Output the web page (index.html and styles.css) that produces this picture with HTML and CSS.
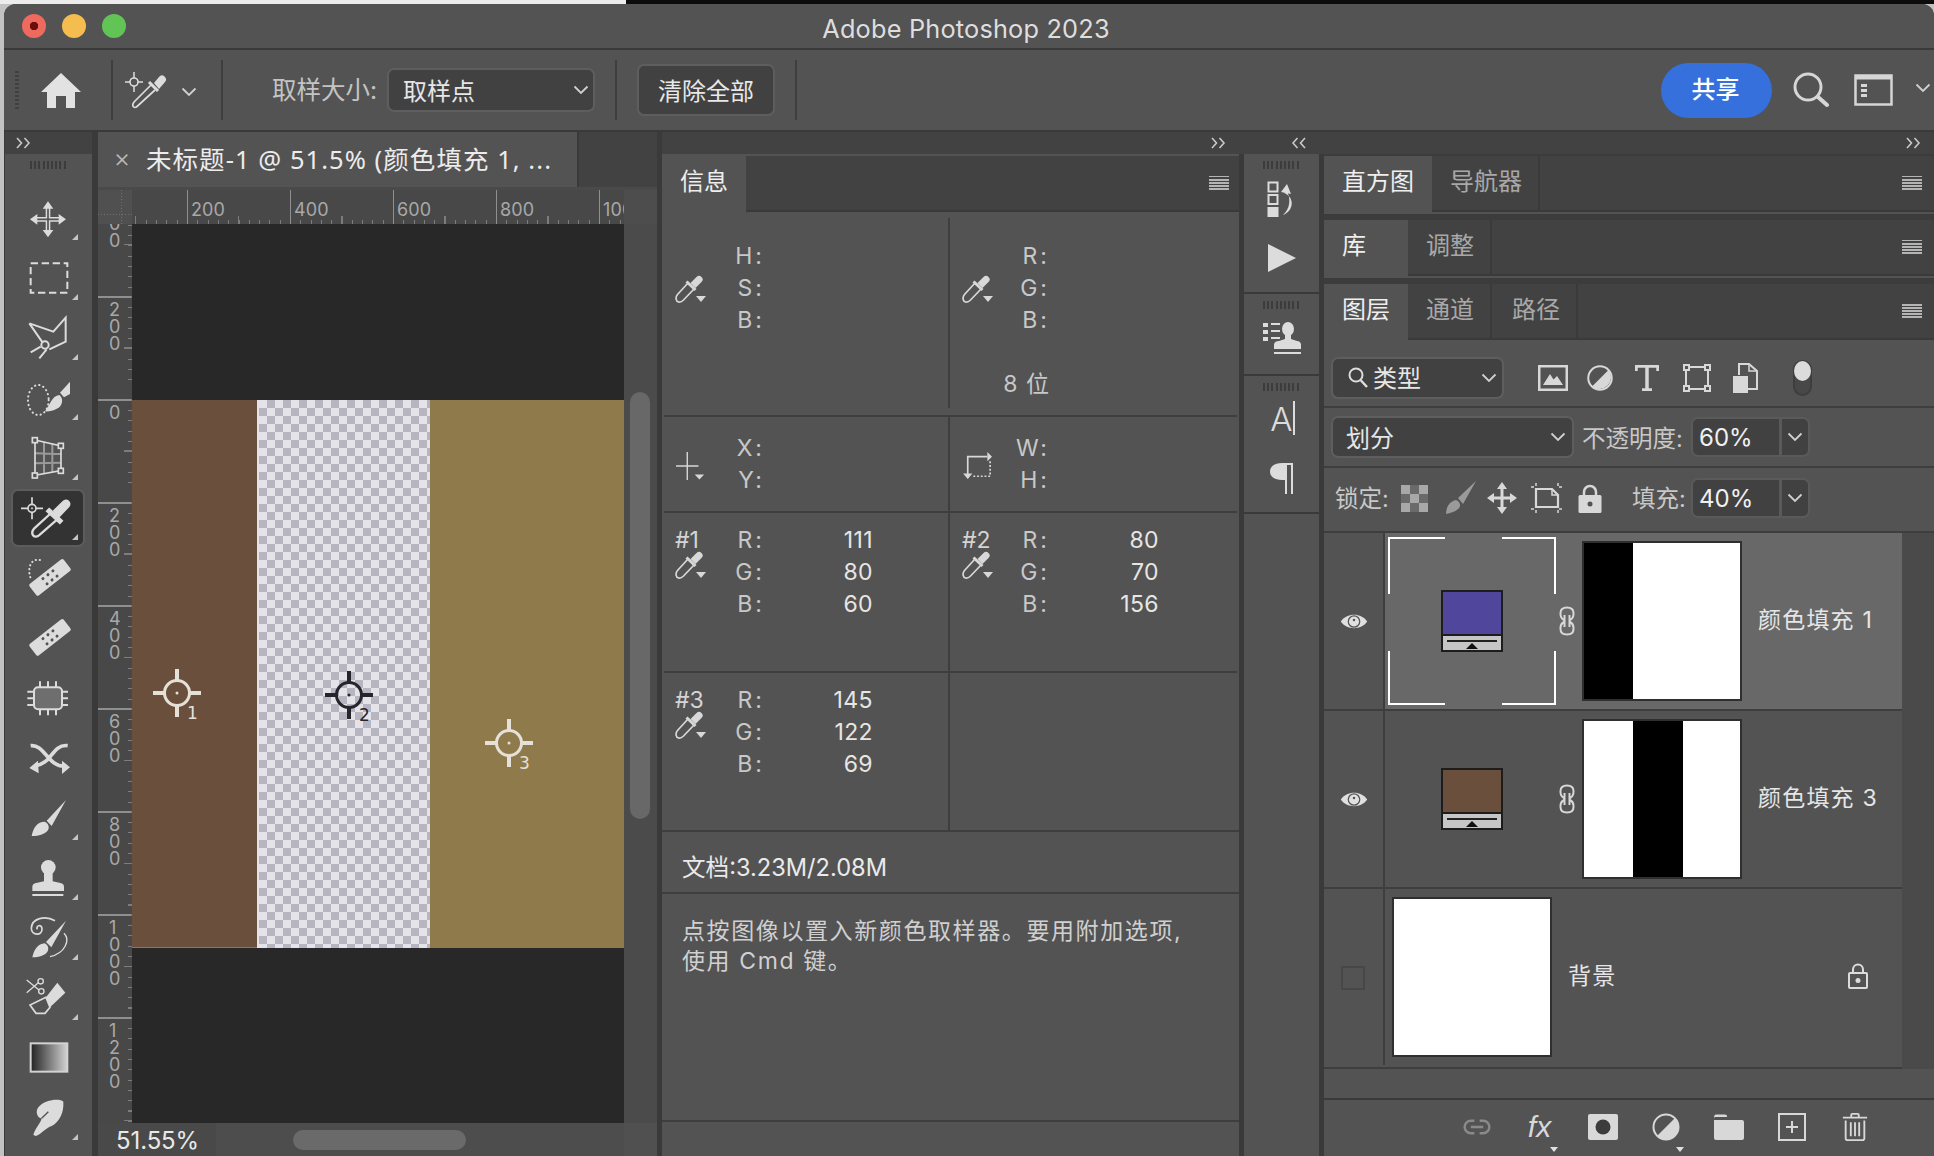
FILE: index.html
```html
<!DOCTYPE html>
<html lang="zh-CN">
<head>
<meta charset="utf-8">
<title>Adobe Photoshop 2023</title>
<link rel="stylesheet" href="styles.css">
</head>
<body>
<svg class="defs" aria-hidden="true">
  <symbol id="drop" viewBox="0 0 32 28">
    <path d="M13 8 L2.5 19.5 C0 22.5 1 26.5 3.5 27 C5.5 27.5 7 26.5 8.5 25 L19.5 13.5" fill="none" stroke="currentColor" stroke-width="1.7"/>
    <path d="M11.5 6.5 L20.5 15" fill="none" stroke="currentColor" stroke-width="3"/>
    <path d="M15.5 8 L21.5 2 a3.5 3.5 0 0 1 5 5 L20.5 13Z" fill="currentColor"/>
    <path d="M21 21 h10 l-5 6z" fill="currentColor"/>
  </symbol>
  <symbol id="chev" viewBox="0 0 16 10">
    <path d="M1.5 1.5 L8 8 L14.5 1.5" fill="none" stroke="currentColor" stroke-width="1.8"/>
  </symbol>
  <symbol id="dbl-r" viewBox="0 0 16 12">
    <path d="M2 1 L6.5 6 L2 11 M9.5 1 L14 6 L9.5 11" fill="none" stroke="currentColor" stroke-width="1.6"/>
  </symbol>
  <symbol id="dbl-l" viewBox="0 0 16 12">
    <path d="M6.5 1 L2 6 L6.5 11 M14 1 L9.5 6 L14 11" fill="none" stroke="currentColor" stroke-width="1.6"/>
  </symbol>
  <symbol id="eye" viewBox="0 0 26 18">
    <path d="M0.5 9 C6 0.500 20 0.500 25.500 9 C20 17.500 6 17.500 0.500 9Z" fill="currentColor"/>
    <circle cx="13" cy="9" r="6" fill="#535353"/>
    <circle cx="13" cy="9" r="4.800" fill="currentColor"/>
    <circle cx="13" cy="7.5" r="1.2" fill="#535353"/>
  </symbol>
  <symbol id="link" viewBox="0 0 16 30">
    <path d="M5 14 C1 12 1.500 9 1.500 7 C1.500 3 4 1.500 8 1.500 C12 1.500 14.500 3 14.500 7 C14.500 9 15 12 11 14 M5 16 C1 18 1.500 21 1.500 23 C1.500 27 4 28.500 8 28.500 C12 28.500 14.500 27 14.500 23 C14.500 21 15 18 11 16 M5.500 9 V21 M10.500 9 V21" fill="none" stroke="currentColor" stroke-width="2"/>
  </symbol>
  <symbol id="fillstrip" viewBox="0 0 58 14">
    <rect width="58" height="14" fill="#c6c6c6"/>
    <rect x="4" y="4" width="50" height="2" fill="#222"/>
    <path d="M23 13 L29 7 L35 13Z" fill="#111"/>
  </symbol>
</svg>

<div class="window">
  <header class="titlebar">
    <div class="lights">
      <span class="light red"></span>
      <span class="light yellow"></span>
      <span class="light green"></span>
    </div>
    <div class="apptitle">Adobe Photoshop 2023</div>
  </header>

  <div class="options">
    <span class="optgrip"></span>
    <svg class="home" viewBox="0 0 40 35"><path d="M20 0 L40 19 H34 V35 H25 V23 H15 V35 H6 V19 H0Z" fill="currentColor"/></svg>
    <span class="vsep sep-a"></span>
    <svg class="optdrop" viewBox="0 0 42 38">
      <g fill="none" stroke="currentColor">
        <circle cx="9" cy="11" r="4" stroke-width="1.600"/>
        <path d="M9 1 V7 M9 15 V21 M0 11 H5 M13 11 H18" stroke-width="1.500"/>
        <path d="M26 14 L10 30 C6 34 8 37.500 11.500 36 L30 19" stroke-width="1.700"/>
        <path d="M24 11 L33 20" stroke-width="3"/>
      </g>
      <path d="M29 12 L34 6 a3.500 3.500 0 0 1 6 5 L34 18Z" fill="currentColor"/>
    </svg>
    <svg class="chev opt-chev"><use href="#chev"/></svg>
    <span class="vsep sep-b"></span>
    <span class="optlabel">取样大小:</span>
    <div class="select sel-sample"><span>取样点</span><svg class="chev"><use href="#chev"/></svg></div>
    <span class="vsep sep-c"></span>
    <button class="clearbtn">清除全部</button>
    <span class="vsep sep-d"></span>
    <button class="share">共享</button>
    <svg class="search" viewBox="0 0 36 36"><circle cx="15" cy="15" r="13" fill="none" stroke="currentColor" stroke-width="3"/><path d="M25 25 L34 33" stroke="currentColor" stroke-width="4" stroke-linecap="round"/></svg>
    <svg class="wsicon" viewBox="0 0 39 32"><rect x="1.500" y="1.500" width="36" height="29" fill="none" stroke="currentColor" stroke-width="2.500"/><rect x="1.500" y="1.500" width="36" height="4" fill="currentColor"/><path d="M7 10 h6 v3 h-6z M7 15 h6 v3 h-6z M7 20 h6 v3 h-6z" fill="currentColor"/></svg>
    <svg class="chev ws-chev"><use href="#chev"/></svg>
  </div>

  <div class="workspace">
    <aside class="tools">
      <div class="striphead"><svg class="dbl dbl-tools"><use href="#dbl-r"/></svg></div>
      <div class="grip"></div>
      <div class="toollist">
        <svg class="tool" viewBox="54 -3 180 180">
          <path d="M144 34 L128 56 H160Z M144 142 L128 120 H160Z M90 88 L112 72 V104Z M198 88 L176 72 V104Z" fill="currentColor"/>
          <path d="M144 50 V126 M106 88 H182" stroke="currentColor" stroke-width="14" fill="none"/>
          <path d="M144 56 V120 M112 88 H176" stroke="#535353" stroke-width="5" fill="none"/>
          <path d="M216 150 H234 V132Z" class="tri"/>
        </svg>
        <svg class="tool" viewBox="54 177 180 180">
          <rect x="92" y="220" width="110" height="88" fill="none" stroke="currentColor" stroke-width="6" stroke-dasharray="22 11"/>
          <path d="M216 330 H234 V312Z" class="tri"/>
        </svg>
        <svg class="tool" viewBox="54 357 180 180">
          <path d="M88 400 L160 425 L197 383 V455 L148 478 M88 400 L128 458 M92 487 L122 470 M118 505 L140 478" fill="none" stroke="currentColor" stroke-width="6"/>
          <circle cx="135" cy="465" r="11" fill="none" stroke="currentColor" stroke-width="6"/>
          <path d="M216 510 H234 V492Z" class="tri"/>
        </svg>
        <svg class="tool" viewBox="54 537 180 180">
          <ellipse cx="115" cy="630" rx="31" ry="45" fill="none" stroke="currentColor" stroke-width="6" stroke-linecap="round" stroke-dasharray="1 12" />
          <path d="M135 664 C150 645 155 618 178 615 C192 625 188 650 170 656 C160 662 146 665 135 664Z M180 608 L210 575 V612 L192 622Z" fill="currentColor"/>
          <path d="M216 690 H234 V672Z" class="tri"/>
        </svg>
        <svg class="tool" viewBox="54 717 180 180">
          <path d="M132 755 L132 850 M157 762 V846 M105 790 L183 792 M105 820 L183 818" stroke="#9a9a9a" stroke-width="6" fill="none"/>
          <path d="M105 750 L183 768 V842 L105 856Z" fill="none" stroke="currentColor" stroke-width="5"/>
          <g fill="#535353" stroke="currentColor" stroke-width="5"><rect x="97" y="743" width="15" height="15"/><rect x="175" y="760" width="15" height="15"/><rect x="175" y="835" width="15" height="15"/><rect x="97" y="849" width="15" height="15"/></g>
          <path d="M216 870 H234 V852Z" class="tri"/>
        </svg>
        <div class="toolactive">
          <svg class="tool" viewBox="54 897 180 180">
            <g fill="none" stroke="currentColor">
              <circle cx="96" cy="955" r="12" stroke-width="5"/>
              <path d="M96 922 V943 M96 967 V988 M63 955 H84 M108 955 H129" stroke-width="5"/>
              <circle cx="96" cy="955" r="2" stroke-width="3"/>
              <path d="M150 972 L103 1015 C90 1030 100 1048 117 1036 L172 988" stroke-width="7"/>
              <path d="M142 958 L185 998" stroke-width="16"/>
            </g>
            <path d="M158 962 L188 933 a13 13 0 0 1 20 18 L176 985Z" fill="currentColor"/>
            <path d="M216 1050 H234 V1032Z" class="tri"/>
          </svg>
        </div>
        <svg class="tool" viewBox="54 1077 180 180">
          <path d="M120 1110 C95 1105 80 1130 92 1165" fill="none" stroke="currentColor" stroke-width="6" stroke-linecap="round" stroke-dasharray="1 11"/>
          <g transform="rotate(-38 150 1162)">
            <rect x="85" y="1140" width="130" height="44" rx="6" fill="currentColor"/>
            <g fill="#535353"><circle cx="131" cy="1152" r="4.500"/><circle cx="150" cy="1152" r="4.500"/><circle cx="169" cy="1152" r="4.500"/><circle cx="131" cy="1172" r="4.500"/><circle cx="150" cy="1172" r="4.500"/><circle cx="169" cy="1172" r="4.500"/></g>
          </g>
        </svg>
        <svg class="tool" viewBox="54 1257 180 180">
          <g transform="rotate(-38 150 1342)">
            <rect x="85" y="1320" width="130" height="44" rx="6" fill="currentColor"/>
            <g fill="#535353"><circle cx="131" cy="1332" r="4.500"/><circle cx="150" cy="1332" r="4.500"/><circle cx="169" cy="1332" r="4.500"/><circle cx="131" cy="1352" r="4.500"/><circle cx="150" cy="1352" r="4.500"/><circle cx="169" cy="1352" r="4.500"/></g>
          </g>
        </svg>
        <svg class="tool" viewBox="54 -3 180 180">
          <rect x="102" y="52" width="84" height="66" rx="12" fill="#6e6e6e" stroke="currentColor" stroke-width="6"/>
          <path d="M120 34 V52 M144 34 V52 M168 34 V52 M120 118 V136 M144 118 V136 M168 118 V136 M82 65 H102 M82 85 H102 M82 105 H102 M186 65 H204 M186 85 H204 M186 105 H204" stroke="currentColor" stroke-width="6" fill="none"/>
        </svg>
        <svg class="tool" viewBox="54 177 180 180">
          <path d="M92 227 C132 222 145 290 192 288 M203 227 C165 222 155 265 135 275 C125 282 118 285 105 288" fill="none" stroke="currentColor" stroke-width="11"/>
          <path d="M210 292 L186 272 L186 312Z M88 294 L114 272 L116 310Z" fill="currentColor"/>
        </svg>
        <svg class="tool" viewBox="54 357 180 180">
          <path d="M95 498 C100 472 112 455 134 455 C150 462 150 480 136 488 C122 496 108 498 95 498Z M140 452 L198 390 L155 468Z" fill="currentColor"/>
          <path d="M216 510 H234 V492Z" class="tri"/>
        </svg>
        <svg class="tool" viewBox="54 537 180 180">
          <circle cx="145" cy="592" r="22" fill="currentColor"/>
          <path d="M97 663 V650 Q97 640 112 638 L132 634 V606 H158 V634 L178 638 Q192 640 192 650 V663Z" fill="currentColor"/>
          <path d="M97 675 H190" stroke="currentColor" stroke-width="6"/>
          <path d="M216 690 H234 V672Z" class="tri"/>
        </svg>
        <svg class="tool" viewBox="54 717 180 180">
          <path d="M165 752 C135 735 95 745 94 775 C94 798 128 798 126 776 C124 760 106 768 112 778" fill="none" stroke="currentColor" stroke-width="5"/>
          <path d="M97 862 C102 838 114 822 134 820 C148 826 148 844 136 852 C122 860 110 862 97 862Z M138 816 L198 752 L154 832Z" fill="currentColor"/>
          <path d="M192 790 C212 810 195 850 150 860" fill="none" stroke="currentColor" stroke-width="4"/>
          <path d="M216 870 H234 V852Z" class="tri"/>
        </svg>
        <svg class="tool" viewBox="54 897 180 180">
          <g fill="none" stroke="currentColor" stroke-width="4"><circle cx="122" cy="934" r="8"/><circle cx="124" cy="964" r="8"/><path d="M80 930 L117 960 M80 968 L115 938"/></g>
          <path d="M138 982 L172 938 L196 968 L150 1012Z" fill="currentColor"/>
          <path d="M138 982 L90 1005 L108 1030 H135 L150 1012Z" fill="none" stroke="currentColor" stroke-width="5"/>
          <path d="M216 1050 H234 V1032Z" class="tri"/>
        </svg>
        <svg class="tool" viewBox="54 1077 180 180">
          <defs><linearGradient id="gr"><stop offset="0" stop-color="#222"/><stop offset="1" stop-color="#d2d2d2"/></linearGradient></defs>
          <rect x="92" y="1120" width="110" height="85" fill="url(#gr)" stroke="#d2d2d2" stroke-width="6"/>
        </svg>
        <svg class="tool" viewBox="54 1257 180 180">
          <path d="M100 1395 C105 1375 122 1360 125 1345 C112 1345 105 1325 115 1312 C135 1288 180 1285 190 1295 C192 1325 180 1355 155 1368 C140 1372 120 1395 108 1398Z" fill="currentColor"/>
          <path d="M125 1345 L145 1325" stroke="#535353" stroke-width="4"/>
          <path d="M216 1410 H234 V1392Z" class="tri"/>
        </svg>
      </div>
    </aside>

    <main class="doc">
      <div class="doctabs">
        <div class="doctab"><span class="close">×</span><span class="doctitle">未标题-1 @ 51.5% (颜色填充 1, ...</span></div>
      </div>
      <div class="rulerrow">
        <div class="corner"></div>
        <div class="hruler">
          <span class="hseg">200</span><span class="hseg">400</span><span class="hseg">600</span><span class="hseg">800</span><span class="hseg">1000</span>
        </div>
        <div class="rulerrest"></div>
      </div>
      <div class="docbody">
        <div class="vruler">
          <span class="vseg vfirst">200</span><span class="vseg">200</span><span class="vseg">0</span><span class="vseg">200</span><span class="vseg">400</span><span class="vseg">600</span><span class="vseg">800</span><span class="vseg">1000</span><span class="vseg">1200</span>
        </div>
        <div class="canvas">
          <div class="imgrow">
            <div class="band brown"></div>
            <div class="band checker"></div>
            <div class="band ochre"></div>
            <svg class="target t1" viewBox="0 0 64 64"><circle cx="26" cy="26" r="12.500" class="ring"/><path d="M26 2 V13 M26 39 V50 M2 26 H13 M39 26 H50" class="ring thick"/><circle cx="26" cy="26" r="1.500" class="dotf"/><text x="36" y="52">1</text></svg>
            <svg class="target t2" viewBox="0 0 64 64"><circle cx="26" cy="26" r="12.500" class="ring"/><path d="M26 2 V13 M26 39 V50 M2 26 H13 M39 26 H50" class="ring thick"/><circle cx="26" cy="26" r="1.500" class="dotf"/><text x="36" y="52">2</text></svg>
            <svg class="target t3" viewBox="0 0 64 64"><circle cx="26" cy="26" r="12.500" class="ring"/><path d="M26 2 V13 M26 39 V50 M2 26 H13 M39 26 H50" class="ring thick"/><circle cx="26" cy="26" r="1.500" class="dotf"/><text x="36" y="52">3</text></svg>
          </div>
        </div>
        <div class="vscroll"><span class="vthumb"></span></div>
      </div>
      <div class="docfoot">
        <span class="zoomlabel">51.55%</span>
        <div class="hscroll"><span class="hthumb"></span></div>
        <span class="footcorner"></span>
      </div>
    </main>

    <section class="info">
      <div class="striphead right"><svg class="dbl"><use href="#dbl-r"/></svg></div>
      <div class="tabs">
        <span class="tab active info-tab">信息</span>
        <span class="menu"></span>
      </div>
      <div class="irow ra">
        <div class="cell">
          <div class="cicon ic-pad1"><svg class="drop"><use href="#drop"/></svg></div>
          <div class="lines">
            <div class="line"><b>H:</b></div><div class="line"><b>S:</b></div><div class="line"><b>B:</b></div>
          </div>
        </div>
        <div class="cell c2">
          <div class="cicon ic-pad1"><svg class="drop"><use href="#drop"/></svg></div>
          <div class="lines">
            <div class="line"><b>R:</b></div><div class="line"><b>G:</b></div><div class="line"><b>B:</b></div>
            <div class="line bits"><b>8 位</b></div>
          </div>
        </div>
      </div>
      <div class="ihr"></div>
      <div class="irow rb">
        <div class="cell">
          <div class="cicon ic-pad2"><svg class="drop" viewBox="0 0 32 30"><path d="M12 0 V30 M0 15 H24" fill="none" stroke="currentColor" stroke-width="1.500"/><path d="M20 24 h10 l-5 5.500z" fill="currentColor"/></svg></div>
          <div class="lines"><div class="line"><b>X:</b></div><div class="line"><b>Y:</b></div></div>
        </div>
        <div class="cell c2">
          <div class="cicon ic-pad2"><svg class="drop" viewBox="0 0 32 30"><path d="M5 28 V5 H26" fill="none" stroke="currentColor" stroke-width="1.800"/><path d="M26 0 L31 5 L26 10Z M0 23 H10 L5 29Z" fill="currentColor"/><path d="M29 10 V26 H9" fill="none" stroke="currentColor" stroke-width="1.800" stroke-dasharray="2 2"/></svg></div>
          <div class="lines"><div class="line"><b>W:</b></div><div class="line"><b>H:</b></div></div>
        </div>
      </div>
      <div class="ihr"></div>
      <div class="irow rc">
        <div class="cell">
          <div class="cicon"><span class="num">#1</span><svg class="drop"><use href="#drop"/></svg></div>
          <div class="lines">
            <div class="line"><b>R:</b><i>111</i></div><div class="line"><b>G:</b><i>80</i></div><div class="line"><b>B:</b><i>60</i></div>
          </div>
        </div>
        <div class="cell c2">
          <div class="cicon"><span class="num">#2</span><svg class="drop"><use href="#drop"/></svg></div>
          <div class="lines">
            <div class="line"><b>R:</b><i>80</i></div><div class="line"><b>G:</b><i>70</i></div><div class="line"><b>B:</b><i>156</i></div>
          </div>
        </div>
      </div>
      <div class="ihr"></div>
      <div class="irow rd">
        <div class="cell">
          <div class="cicon"><span class="num">#3</span><svg class="drop"><use href="#drop"/></svg></div>
          <div class="lines">
            <div class="line"><b>R:</b><i>145</i></div><div class="line"><b>G:</b><i>122</i></div><div class="line"><b>B:</b><i>69</i></div>
          </div>
        </div>
        <div class="cell c2"></div>
      </div>
      <div class="docsize">文档:3.23M/2.08M</div>
      <div class="hint">点按图像以置入新颜色取样器。要用附加选项,<br>使用 Cmd 键。</div>
      <div class="infofoot"></div>
    </section>

    <nav class="dock">
      <div class="striphead dockhead"><svg class="dbl"><use href="#dbl-l"/></svg></div>
      <div class="docksec s1">
        <div class="grip"></div>
        <svg class="dockicon hist" viewBox="0 0 32 36"><path d="M1.500 1.500 H10.500 V10.500 H1.500Z M1.500 14 H10.500 V23 H1.500Z" fill="none" stroke="currentColor" stroke-width="2"/><rect x="0.500" y="26" width="11" height="10" fill="currentColor"/><path d="M17 12 C28 16 27 30 16 34 C23 28 24 18 20 10" fill="currentColor"/><path d="M14 11 L20 3 L24 13Z" fill="currentColor"/></svg>
        <svg class="dockicon play" viewBox="0 0 28 28"><path d="M0 0 L28 14 L0 28Z" fill="currentColor"/></svg>
      </div>
      <div class="docksec s2">
        <div class="grip"></div>
        <svg class="dockicon stamp" viewBox="0 0 38 33"><path d="M0 1 h5 v4 h-5z M8 1 h9 v2 h-9z M0 8 h5 v4 h-5z M8 8 h9 v2 h-9z M0 15 h5 v4 h-5z M8 15 h9 v2 h-9z" fill="currentColor"/><ellipse cx="25" cy="7" rx="6" ry="7" fill="currentColor"/><path d="M11 27 V22 Q12 19 16 19 L22 17 V11 H28 V17 L34 19 Q37 19 38 22 V27Z M11 30 H38 V32 H11Z" fill="currentColor"/></svg>
      </div>
      <div class="docksec s3">
        <div class="grip"></div>
        <div class="charicon"><span class="bigA">A</span><span class="caret"></span></div>
        <svg class="dockicon pil" viewBox="0 0 24 31"><path d="M12 0 H23 V31 H21 V2 H17 V31 H15 V17 H12 C4 17 0 13 0 8.500 C0 4 4 0 12 0Z" fill="currentColor"/></svg>
      </div>
      <div class="docksec s4"></div>
    </nav>

    <section class="panels">
      <div class="striphead right"><svg class="dbl"><use href="#dbl-r"/></svg></div>
      <div class="group">
        <div class="tabs">
          <span class="tab active t108">直方图</span><span class="tab t108">导航器</span>
          <span class="menu"></span>
        </div>
      </div>
      <div class="group">
        <div class="tabs">
          <span class="tab active t84">库</span><span class="tab t84">调整</span>
          <span class="menu"></span>
        </div>
      </div>
      <div class="layers">
        <div class="tabs">
          <span class="tab active t84">图层</span><span class="tab t84">通道</span><span class="tab t86">路径</span>
          <span class="menu"></span>
        </div>
        <div class="lrow filterrow">
          <div class="select sel-filter">
            <svg class="mini" viewBox="0 0 20 22"><circle cx="8" cy="8" r="6.500" fill="none" stroke="currentColor" stroke-width="2"/><path d="M12.500 13 L19 20" stroke="currentColor" stroke-width="2.500"/></svg>
            <span>类型</span><svg class="chev"><use href="#chev"/></svg>
          </div>
          <svg class="ficon f1" viewBox="0 0 30 26"><rect x="1.250" y="1.250" width="27.500" height="23.500" fill="none" stroke="currentColor" stroke-width="2.500"/><path d="M5 20 L12 9 L15.500 14.500 L19 11 L25 20Z" fill="currentColor"/></svg>
          <svg class="ficon f2" viewBox="0 0 26 26"><circle cx="13" cy="13" r="11.750" fill="none" stroke="currentColor" stroke-width="2"/><path d="M21.500 5 A11.750 11.750 0 0 1 5 21.500Z" fill="currentColor"/></svg>
          <svg class="ficon f3" viewBox="0 0 24 26"><path d="M1 6 V1 H23 V6 M12 1 V25 M7 25 H17" fill="none" stroke="currentColor" stroke-width="3.500"/></svg>
          <svg class="ficon f4" viewBox="0 0 28 28"><rect x="3" y="3" width="22" height="22" fill="none" stroke="currentColor" stroke-width="2"/><g fill="#535353" stroke="currentColor" stroke-width="2"><rect x="1" y="1" width="5" height="5"/><rect x="22" y="1" width="5" height="5"/><rect x="1" y="22" width="5" height="5"/><rect x="22" y="22" width="5" height="5"/></g></svg>
          <svg class="ficon f5" viewBox="0 0 26 30"><path d="M7 12 V1 H17 L25 8 V26 H15" fill="none" stroke="currentColor" stroke-width="2"/><path d="M17 1 V8 H25" fill="none" stroke="currentColor" stroke-width="1.500"/><rect x="1" y="13" width="15" height="17" fill="currentColor"/></svg>
          <span class="toggle"><span class="knob"></span></span>
        </div>
        <div class="lrow blendrow">
          <div class="select sel-blend"><span>划分</span><svg class="chev"><use href="#chev"/></svg></div>
          <span class="flabel opl">不透明度:</span>
          <div class="numbox"><span class="nval">60%</span><span class="ndrop"><svg class="chev"><use href="#chev"/></svg></span></div>
        </div>
        <div class="lrow lockrow">
          <span class="flabel lockl">锁定:</span>
          <svg class="licon l1" viewBox="0 0 27 27"><rect width="27" height="27" fill="#a8a8a8"/><path d="M9 0 h9 v9 h-9z M0 9 h9 v9 h-9z M18 9 h9 v9 h-9z M9 18 h9 v9 h-9z" fill="#6a6a6a"/></svg>
          <svg class="licon l2" viewBox="0 0 32 34"><path d="M1 33 C1 26 5 20 11 19 C16 21 16 26 13 28 C10 31 5 32 1 33Z M13 17 L31 0 L18 23Z" fill="#9a9a9a"/></svg>
          <svg class="licon l3" viewBox="0 0 30 32"><path d="M15 0 L10 7 H20Z M15 32 L10 25 H20Z M0 16 L7 11 V21Z M30 16 L23 11 V21Z" fill="currentColor"/><path d="M15 5 V27 M5 16 H25" stroke="currentColor" stroke-width="3"/></svg>
          <svg class="licon l4" viewBox="0 0 32 30"><path d="M5 6 H21 L27 12 V24 H5Z" fill="none" stroke="currentColor" stroke-width="2.200"/><path d="M21 6 V12 H27" fill="none" stroke="currentColor" stroke-width="1.500"/><path d="M0 4 h3 M5 0 v3 M28 4 h3 M27 0 v3 M0 26 h3 M5 27 v3 M28 26 h3 M27 27 v3" stroke="currentColor" stroke-width="1.500"/></svg>
          <svg class="licon l5" viewBox="0 0 24 29"><path d="M6 12 V8 a6 6 0 0 1 12 0 V12" fill="none" stroke="currentColor" stroke-width="2.500"/><rect x="0.500" y="11" width="23" height="18" rx="1.500" fill="currentColor"/><circle cx="12" cy="20" r="2.500" fill="#535353"/></svg>
          <span class="flabel filll">填充:</span>
          <div class="numbox"><span class="nval">40%</span><span class="ndrop"><svg class="chev"><use href="#chev"/></svg></span></div>
        </div>
        <div class="layerlist">
          <div class="layer sel">
            <div class="vis"><svg class="eye"><use href="#eye"/></svg></div>
            <div class="lbody">
              <div class="bracket">
                <div class="fillthumb"><span class="swatch purple"></span><svg class="strip"><use href="#fillstrip"/></svg></div>
              </div>
              <svg class="chain"><use href="#link"/></svg>
              <div class="mask m1"></div>
              <span class="lname">颜色填充 1</span>
            </div>
          </div>
          <div class="layer">
            <div class="vis"><svg class="eye"><use href="#eye"/></svg></div>
            <div class="lbody">
              <div class="bracket plain">
                <div class="fillthumb"><span class="swatch umber"></span><svg class="strip"><use href="#fillstrip"/></svg></div>
              </div>
              <svg class="chain"><use href="#link"/></svg>
              <div class="mask m2"></div>
              <span class="lname">颜色填充 3</span>
            </div>
          </div>
          <div class="layer last">
            <div class="vis"><span class="novis"></span></div>
            <div class="lbody">
              <div class="mask bg"></div>
              <span class="lname bgname">背景</span>
              <svg class="bglock" viewBox="0 0 20 26"><path d="M5 10 V6.500 a5 5 0 0 1 10 0 V10" fill="none" stroke="currentColor" stroke-width="2"/><rect x="1" y="10" width="18" height="15" rx="1" fill="none" stroke="currentColor" stroke-width="2"/><circle cx="10" cy="17.500" r="2.500" fill="currentColor"/></svg>
            </div>
          </div>
        </div>
        <div class="lfoot">
          <span class="fcell"><svg class="fi dim" viewBox="0 0 34 20"><path d="M14 3 H10 a7 7 0 0 0 0 14 h4 M20 3 h4 a7 7 0 0 1 0 14 h-4 M10 10 H24" fill="none" stroke="currentColor" stroke-width="2.800"/></svg></span>
          <span class="fcell fx">fx<em class="ftri"></em></span>
          <span class="fcell"><svg class="fi" viewBox="0 0 30 26"><rect width="30" height="26" rx="2" fill="currentColor"/><ellipse cx="15" cy="13" rx="7.500" ry="7.500" fill="#3c3c3c"/></svg></span>
          <span class="fcell"><svg class="fi" viewBox="0 0 28 28"><circle cx="14" cy="14" r="12.500" fill="none" stroke="currentColor" stroke-width="2"/><path d="M23 5 A12.500 12.500 0 0 1 5 23Z" fill="currentColor"/></svg><em class="ftri"></em></span>
          <span class="fcell"><svg class="fi" viewBox="0 0 30 26"><path d="M0 4 Q0 0.500 2 0.500 H11 Q13 0.500 13 2 V3 H1Z M0 6 H28 Q30 6 30 8 V24 Q30 26 28 26 H2 Q0 26 0 24Z" fill="currentColor"/></svg></span>
          <span class="fcell"><svg class="fi" viewBox="0 0 28 28"><rect x="1" y="1" width="26" height="26" fill="none" stroke="currentColor" stroke-width="2"/><path d="M14 8 V20 M8 14 H20" stroke="currentColor" stroke-width="2"/></svg></span>
          <span class="fcell"><svg class="fi" viewBox="0 0 26 30"><path d="M0 5 H26 M9 5 V2 Q9 1 10 1 H16 Q17 1 17 2 V5" fill="none" stroke="currentColor" stroke-width="2"/><path d="M3 8 V27 Q3 29 5 29 H21 Q23 29 23 27 V8" fill="none" stroke="currentColor" stroke-width="2"/><path d="M8.500 10 V25 M13 10 V25 M17.500 10 V25" stroke="currentColor" stroke-width="2"/></svg></span>
        </div>
      </div>
    </section>
  </div>
</div>
</body>
</html>
```

FILE: styles.css
```css
* { box-sizing: border-box; }
html, body { margin: 0; height: 100%; overflow: hidden; }
body {
  background: linear-gradient(90deg, #ececec 626px, #0c0c0c 626px) 0 0 / 100% 4px no-repeat, #c2c2c2;
  font-family: Inter, "Noto Sans CJK SC", sans-serif;
  color: #e0e0e0;
}
.defs { display: none; }
svg { display: block; flex: none; }
.window {
  margin: 4px 0 0 4px;
  width: 1930px;
  height: 1152px;
  background: #3a3a3a;
  border-radius: 12px 12px 0 0;
  overflow: hidden;
  display: flex;
  flex-direction: column;
}
.titlebar {
  height: 44px;
  background: #535353;
  display: flex;
  align-items: center;
  position: relative;
  flex: none;
}
.lights { display: flex; gap: 16px; padding-left: 18px; }
.light { width: 24px; height: 24px; border-radius: 50%; display: block; }
.red { background: radial-gradient(circle, #6b0f0a 0 4px, #ee6a5f 4.5px); }
.yellow { background: #f5bd4f; }
.green { background: #61c454; }
.apptitle {
  position: absolute;
  left: 0; right: 6px; top: 0;
  line-height: 49px;
  text-align: center;
  font-size: 25.300px;
  color: #dedede;
  letter-spacing: 0.2px;
}
.options {
  height: 80px;
  margin-top: 2px;
  background: #535353;
  display: flex;
  align-items: center;
  flex: none;
  color: #dcdcdc;
}
.optgrip {
  width: 4px; height: 38px; margin-left: 11px;
  background: repeating-linear-gradient(#404040 0 2px, transparent 2px 4px);
}
.home { width: 40px; height: 35px; margin-left: 22px; color: #e2e2e2; }
.vsep { width: 2px; height: 60px; background: #3e3e3e; flex: none; }
.sep-a { margin-left: 30px; }
.optdrop { width: 42px; height: 38px; margin-left: 12px; }
.chev { width: 16px; height: 10px; color: #d0d0d0; }
.opt-chev { margin-left: 14px; margin-top: 4px; }
.sep-b { margin-left: 24px; }
.optlabel { margin-left: 49px; font-size: 24.500px; line-height: 44px; color: #c4c4c4; white-space: nowrap; width: 115px; }
.select {
  display: flex;
  align-items: center;
  justify-content: space-between;
  background: #414141;
  border: 2px solid #5e5e5e;
  border-radius: 7px;
  color: #e6e6e6;
  font-size: 24px;
}
.select > span { padding-bottom: 2px; }
.sel-sample { width: 208px; height: 44px; padding: 0 4px 0 14px; }
.sep-c { margin-left: 20px; }
.clearbtn {
  margin-left: 20px;
  width: 138px; height: 52px;
  background: #414141;
  border: 2px solid #5e5e5e;
  border-radius: 7px;
  color: #e8e8e8;
  font: 24px Inter, "Noto Sans CJK SC", sans-serif;
  padding: 0 0 2px;
}
.sep-d { margin-left: 20px; }
.share {
  margin-left: auto;
  width: 111px; height: 55px;
  background: #3570dd;
  border: 0;
  border-radius: 28px;
  color: #fff;
  font: 500 24px Inter, "Noto Sans CJK SC", sans-serif;
  padding: 0 2px 6px 0;
}
.search { width: 36px; height: 36px; margin-left: 21px; color: #d6d6d6; }
.wsicon { width: 39px; height: 32px; margin-left: 25px; color: #d6d6d6; }
.ws-chev { margin-left: 22px; margin-top: -4px; margin-right: 3px; }

.workspace { flex: 1; min-height: 0; display: flex; gap: 5px; margin-top: 2px; padding-left: 1px; }
.striphead {
  height: 22px;
  background: #424242;
  display: flex;
  align-items: center;
  flex: none;
  margin-bottom: 2px;
  color: #c8c8c8;
}
.striphead.right { justify-content: flex-end; padding-right: 13px; }
.dbl { width: 16px; height: 12px; }
.dbl-tools { margin-left: 10px; }

.tools { width: 87px; margin-right: 1px; background: #535353; flex: none; display: flex; flex-direction: column; }
.tools .striphead { margin-bottom: 0; }
.grip {
  width: 38px; height: 8px; flex: none;
  margin: 7px auto 0;
  background: repeating-linear-gradient(90deg, #3c3c3c 0 2px, transparent 2px 4.200px);
}
.toollist { margin-top: 20px; padding-right: 2px; display: flex; flex-direction: column; align-items: center; color: #dcdcdc; }
.tool { width: 60px; height: 60px; }
.tri { fill: #c4c4c4; }
.toolactive {
  width: 74px; height: 58px; margin: 0 0 2px;
  background: #333;
  border: 2px solid #5c5c5c;
  border-radius: 7px;
  display: flex;
  align-items: flex-start;
  justify-content: center;
}
.toolactive .tool { margin-top: -2px; }

.doc { width: 559px; flex: none; display: flex; flex-direction: column; background: #4a4a4a; }
.doctabs { height: 55px; background: #424242; flex: none; display: flex; }
.doctab {
  width: 481px; height: 55px;
  background: #535353;
  border-right: 2px solid #3a3a3a;
  display: flex;
  align-items: center;
  padding-bottom: 5px;
}
.close { width: 48px; text-align: center; font-size: 26px; font-weight: 300; color: #b8b8b8; }
.doctitle { font-size: 25.500px; color: #ececec; white-space: nowrap; font-family: "Noto Sans", "Noto Sans CJK SC", sans-serif; letter-spacing: 1.050px; }
.rulerrow { height: 34px; margin-top: 3px; flex: none; display: flex; }
.corner {
  width: 34px;
  background:
    repeating-linear-gradient(180deg, #707070 0 1px, transparent 1px 3px) 23px 0 / 1px 100% no-repeat,
    repeating-linear-gradient(90deg, #707070 0 1px, transparent 1px 3px) 0 24px / 100% 1px no-repeat,
    #505050;
}
.hruler {
  width: 492px;
  display: flex;
  overflow: hidden;
  padding-left: 55px;
  background:
    repeating-linear-gradient(90deg, transparent 0 3.500px, #7c7c7c 3.500px 4.500px, transparent 4.500px 10.300px) 0 100% / 100% 4px no-repeat,
    repeating-linear-gradient(90deg, transparent 0 3.500px, #7c7c7c 3.500px 4.500px, transparent 4.500px 51.500px) 0 100% / 100% 8px no-repeat,
    #484848;
}
.hseg {
  width: 103px; flex: none;
  border-left: 1px solid #8f8f8f;
  padding: 9px 0 0 3px;
  font-size: 18px;
  line-height: 22px;
  color: #a8a8a8;
  letter-spacing: 0.1px;
}
.rulerrest { flex: 1; background: #4d4d4d; }
.docbody { flex: 1; min-height: 0; display: flex; }
.vruler {
  width: 34px; flex: none;
  overflow: hidden;
  display: flex;
  flex-direction: column;
  background:
    repeating-linear-gradient(180deg, transparent 0 0.700px, #7c7c7c 0.700px 1.700px, transparent 1.700px 10.300px) 100% 0 / 4px 100% no-repeat,
    repeating-linear-gradient(180deg, transparent 0 20.500px, #7c7c7c 20.500px 21.500px, transparent 21.500px 51.500px) 100% 0 / 8px 100% no-repeat,
    #484848;
}
.vseg {
  height: 103px; flex: none;
  border-top: 1px solid #8f8f8f;
  padding: 4px 11px 0 11px;
  font-size: 18px;
  line-height: 17px;
  color: #a8a8a8;
  word-break: break-all;
  width: calc(1ch + 22px);
  background: linear-gradient(#8f8f8f, #8f8f8f) 0 0 / 34px 1px no-repeat;
}
.vfirst { margin-top: -31px; }
.canvas { width: 492px; flex: none; background: #282828; padding-top: 176px; }
.imgrow { height: 548px; display: flex; position: relative; }
.band { height: 100%; }
.brown { width: 125px; background: #6a503c; border-bottom: 1px solid #8e7a4a; }
.checker {
  width: 173px;
  background: repeating-conic-gradient(#b6b5c0 0 25%, #e4e3ea 0 50%) 0 0 / 16px 16px;
  border-left: 2px solid #e4e3ea;
}
.ochre { flex: 1; background: #8e7a4a; }
.target { position: absolute; width: 64px; height: 64px; }
.ring { fill: none; stroke: #e6e1d8; stroke-width: 3; }
.ring.thick { stroke-width: 4; }
.dotf { fill: #e6e1d8; }
.target text { font: 17px "DejaVu Sans", sans-serif; fill: #e6e1d8; }
.t1 { left: 19px; top: 267px; }
.t2 { left: 191px; top: 269px; }
.t3 { left: 351px; top: 317px; }
.t2 .ring { stroke: #25252b; }
.t2 .dotf { fill: #25252b; }
.t2 text { fill: #25252b; }
.vscroll { flex: 1; background: #4b4b4b; padding: 168px 0 0 6px; }
.vthumb { display: block; width: 20px; height: 427px; background: #686868; border-radius: 10px; }
.docfoot { height: 33px; flex: none; display: flex; background: #4d4d4d; }
.zoomlabel { width: 118px; background: #494949; padding-left: 18px; font-size: 24px; line-height: 35px; color: #e8e8e8; font-weight: 400; letter-spacing: -0.1px; }
.hscroll { width: 408px; padding: 7px 0 0 77px; }
.hthumb { display: block; width: 173px; height: 20px; background: #6a6a6a; border-radius: 10px; }
.footcorner { flex: 1; background: #505050; }

.info { width: 577px; flex: none; display: flex; flex-direction: column; background: #535353; }
.tabs {
  height: 56px; flex: none;
  display: flex;
  position: relative;
  background: #424242;
  border-bottom: 2px solid #3a3a3a;
  font-size: 24px;
}
.tab {
  height: 56px;
  display: flex;
  align-items: center;
  justify-content: flex-start;
  padding: 0 0 10px 18px;
  color: #a8a8a8;
  border-right: 2px solid #3a3a3a;
}
.tab.active { background: #535353; color: #eeeeee; border-right: 0; }
.info-tab { width: 84px; }
.menu {
  margin: 20px 10px 0 auto;
  width: 20px; height: 14px;
  background: repeating-linear-gradient(#b4b4b4 0 1.500px, transparent 1.500px 3.100px);
}
.panels .menu { margin-right: 12px; }
.irow { display: flex; flex: none; }
.ra { height: 190px; margin: 6px 0 7px; padding-top: 22px; }
.rb { height: 94px; padding-top: 15px; }
.rc { height: 158px; padding-top: 11px; }
.rd { height: 157px; padding-top: 11px; border-bottom: 0; }
.ihr { height: 2px; margin: 0 2px; background: #3e3e3e; flex: none; }
.cell { width: 288px; flex: none; display: flex; border-right: 2px solid #3e3e3e; margin-top: -22px; padding-top: 22px; }
.rb .cell { margin-top: -15px; padding-top: 15px; }
.rc .cell, .rd .cell { margin-top: -11px; padding-top: 11px; }
.c2 { border-right: 0; width: 289px; }
.cicon { width: 50px; padding-left: 13px; flex: none; color: #d8d8d8; }
.c2 .cicon { width: 42px; padding-left: 12px; }
.drop { width: 32px; height: 28px; }
.ic-pad1 { padding-top: 35px; }
.ic-pad2 { padding-top: 20px; }
.num { display: block; font-size: 23px; line-height: 32px; height: 27px; color: #d4d4d4; }
.lines { flex: 1; }
.line { display: flex; height: 32px; line-height: 32px; font-size: 23px; }
.line b { font-weight: 400; width: 53px; text-align: right; color: #c8c8c8; letter-spacing: 3px; white-space: nowrap; }
.c2 .line b { width: 58px; }
.line i { font-style: normal; width: 108px; text-align: right; color: #e6e6e6; letter-spacing: 0.4px; }
.c2 .line i { width: 109px; }
.line.bits { margin-top: 32px; }
.line.bits b { letter-spacing: 1px; }
.docsize {
  height: 64px; flex: none;
  border-top: 2px solid #3e3e3e;
  border-bottom: 2px solid #3e3e3e;
  padding: 21px 0 0 20px;
  font-size: 23.600px;
  line-height: 30px;
  color: #eaeaea;
}
.hint {
  height: 226px; flex: none;
  padding: 22px 0 0 20px;
  font-size: 23px;
  line-height: 30px;
  letter-spacing: 1.600px;
  color: #d0d0d0;
}
.infofoot { flex: 1; border-top: 2px solid #3e3e3e; }

.dock { width: 75px; flex: none; display: flex; flex-direction: column; gap: 2px; position: relative; }
.dockhead { margin-bottom: -2px; padding-left: 52px; background: #424242; width: 85px; margin-left: -5px; }
.docksec { background: #535353; display: flex; flex-direction: column; align-items: center; color: #dcdcdc; flex: none; }
.s1 { height: 138px; }
.s2 { height: 80px; }
.s3 { height: 136px; }
.s4 { flex: 1; }
.dockicon { display: block; }
.hist { width: 32px; height: 36px; margin-top: 12px; margin-left: 2px; }
.play { width: 28px; height: 28px; margin-top: 27px; }
.stamp { width: 38px; height: 33px; margin-top: 13px; }
.charicon { display: flex; align-items: flex-start; height: 36px; margin-top: 10px; margin-left: 2px; }
.bigA { font-size: 33px; font-weight: 300; line-height: 36px; color: #dcdcdc; }
.caret { width: 1.500px; height: 34px; background: #dcdcdc; margin-left: 1px; }
.pil { width: 24px; height: 31px; margin-top: 26px; }

.panels { flex: 1; min-width: 0; display: flex; flex-direction: column; background: #3c3c3c; }
.group { height: 58px; flex: none; margin-bottom: 6px; background: #535353; }
.t108 { width: 108px; }
.t84 { width: 84px; }
.t86 { width: 86px; padding-left: 20px; }
.layers { flex: 1; min-height: 0; display: flex; flex-direction: column; background: #535353; }
.lrow { display: flex; align-items: center; flex: none; border-bottom: 2px solid #3e3e3e; color: #dcdcdc; }
.filterrow { height: 68px; padding: 9px 0 0 7px; }
.sel-filter { width: 173px; height: 42px; padding: 0 5px 0 15px; justify-content: flex-start; }
.sel-filter .chev { margin-left: auto; }
.mini { width: 20px; height: 22px; margin-right: 5px; color: #dcdcdc; }
.ficon { color: #d8d8d8; }
.f1 { width: 30px; height: 26px; margin-left: 34px; }
.f2 { width: 26px; height: 26px; margin-left: 19px; }
.f3 { width: 24px; height: 26px; margin-left: 22px; }
.f4 { width: 28px; height: 28px; margin-left: 24px; }
.f5 { width: 26px; height: 30px; margin-left: 21px; }
.toggle { width: 19px; height: 36px; margin-left: 35px; border: 2px solid #3e3e3e; background: #484848; border-radius: 10px; position: relative; display: block; }
.knob { position: absolute; left: -1px; top: -1px; width: 17px; height: 20px; border-radius: 50%; background: #dcdcdc; }
.blendrow { height: 60px; padding: 0 0 0 7px; }
.sel-blend { width: 243px; height: 42px; padding: 0 6px 0 13px; }
.flabel { font-size: 23.500px; color: #c8c8c8; white-space: nowrap; padding-bottom: 1px; }
.lockrow .flabel { padding-bottom: 3px; }
.opl { margin-left: 8px; width: 109px; }
.numbox { width: 119px; height: 40px; display: flex; background: #414141; border: 2px solid #5a5a5a; border-radius: 7px; }
.nval { width: 89px; padding-left: 6px; font-size: 24px; line-height: 37px; color: #f0f0f0; border-right: 3px solid #5a5a5a; }
.ndrop { flex: 1; display: flex; align-items: center; justify-content: center; }
.lockrow { height: 65px; padding: 0 0 3px 11px; }
.lockl { width: 66px; }
.licon { color: #d8d8d8; }
.l1 { width: 27px; height: 27px; }
.l2 { width: 32px; height: 34px; margin-left: 17px; }
.l3 { width: 30px; height: 32px; margin-left: 10px; }
.l4 { width: 32px; height: 30px; margin-left: 14px; }
.l5 { width: 24px; height: 29px; margin-left: 15px; }
.filll { margin-left: 30px; width: 59px; }
.layerlist { height: 536px; flex: none; padding-right: 32px; background: #4a4a4a; }
.layer { height: 178px; display: flex; background: #535353; border-bottom: 2px solid #3e3e3e; }
.layer.last { height: 180px; padding-bottom: 2px; }
.vis { width: 61px; flex: none; border-right: 2px solid #3e3e3e; display: flex; align-items: center; padding-left: 16px; }
.eye { width: 28px; height: 19px; color: #e0e0e0; }
.novis { width: 24px; height: 24px; border: 2px solid #474747; display: block; margin-top: 2px; margin-left: 1px; }
.lbody { flex: 1; display: flex; align-items: center; }
.sel .lbody { background: #686868; }
.bracket {
  width: 168px; height: 168px;
  margin-left: 3px;
  display: flex; align-items: center; justify-content: center;
  background-repeat: no-repeat;
  background-image:
    linear-gradient(#fff, #fff), linear-gradient(#fff, #fff), linear-gradient(#fff, #fff), linear-gradient(#fff, #fff),
    linear-gradient(#fff, #fff), linear-gradient(#fff, #fff), linear-gradient(#fff, #fff), linear-gradient(#fff, #fff);
  background-position: 0 0, 0 0, 100% 0, 100% 0, 0 100%, 0 100%, 100% 100%, 100% 100%;
  background-size: 57px 2px, 2px 57px, 54px 2px, 2px 57px, 57px 2px, 2px 54px, 54px 2px, 2px 54px;
}
.bracket.plain { background-image: none; }
.fillthumb { width: 62px; height: 62px; border: 2px solid #1d1d1d; display: flex; flex-direction: column; background: #1d1d1d; }
.swatch { flex: 1; display: block; margin-bottom: 2px; }
.purple { background: #50469c; }
.umber { background: #6a503c; }
.strip { width: 58px; height: 14px; }
.chain { width: 16px; height: 30px; margin: 0 7px 0 3px; color: #d8d8d8; flex: none; }
.mask { width: 160px; height: 160px; border: 2px solid #2f2f2f; flex: none; background: #fff; }
.m1 { background: linear-gradient(90deg, #000 49px, #fff 49px); }
.m2 { background: linear-gradient(90deg, #fff 49px, #000 49px 99px, #fff 99px); }
.lname { margin-left: 16px; padding-bottom: 6px; font-size: 23px; letter-spacing: 1.200px; color: #e6e6e6; white-space: nowrap; }
.bg { margin-left: 7px; }
.bgname { margin-left: 16px; }
.bglock { width: 20px; height: 26px; margin-left: auto; margin-right: 34px; margin-bottom: 2px; color: #dcdcdc; }
.lfoot {
  flex: 1; min-height: 0;
  margin-top: 29px;
  border-top: 2px solid #3a3a3a;
  background: #535353;
  display: flex;
  justify-content: flex-end;
  padding: 0 48px 0 0;
  color: #d8d8d8;
}
.layers { position: relative; }
.fcell { width: 63px; height: 54px; display: flex; align-items: center; justify-content: center; position: relative; }
.fi { width: 30px; height: 28px; }
.dim { color: #8a8a8a; }
.fx { font: italic 30px "Liberation Sans", sans-serif; letter-spacing: 0; }
.ftri {
  position: absolute; right: 13px; bottom: 2px;
  border-left: 4px solid transparent; border-right: 4px solid transparent; border-top: 5px solid #e0e0e0;
}
```
